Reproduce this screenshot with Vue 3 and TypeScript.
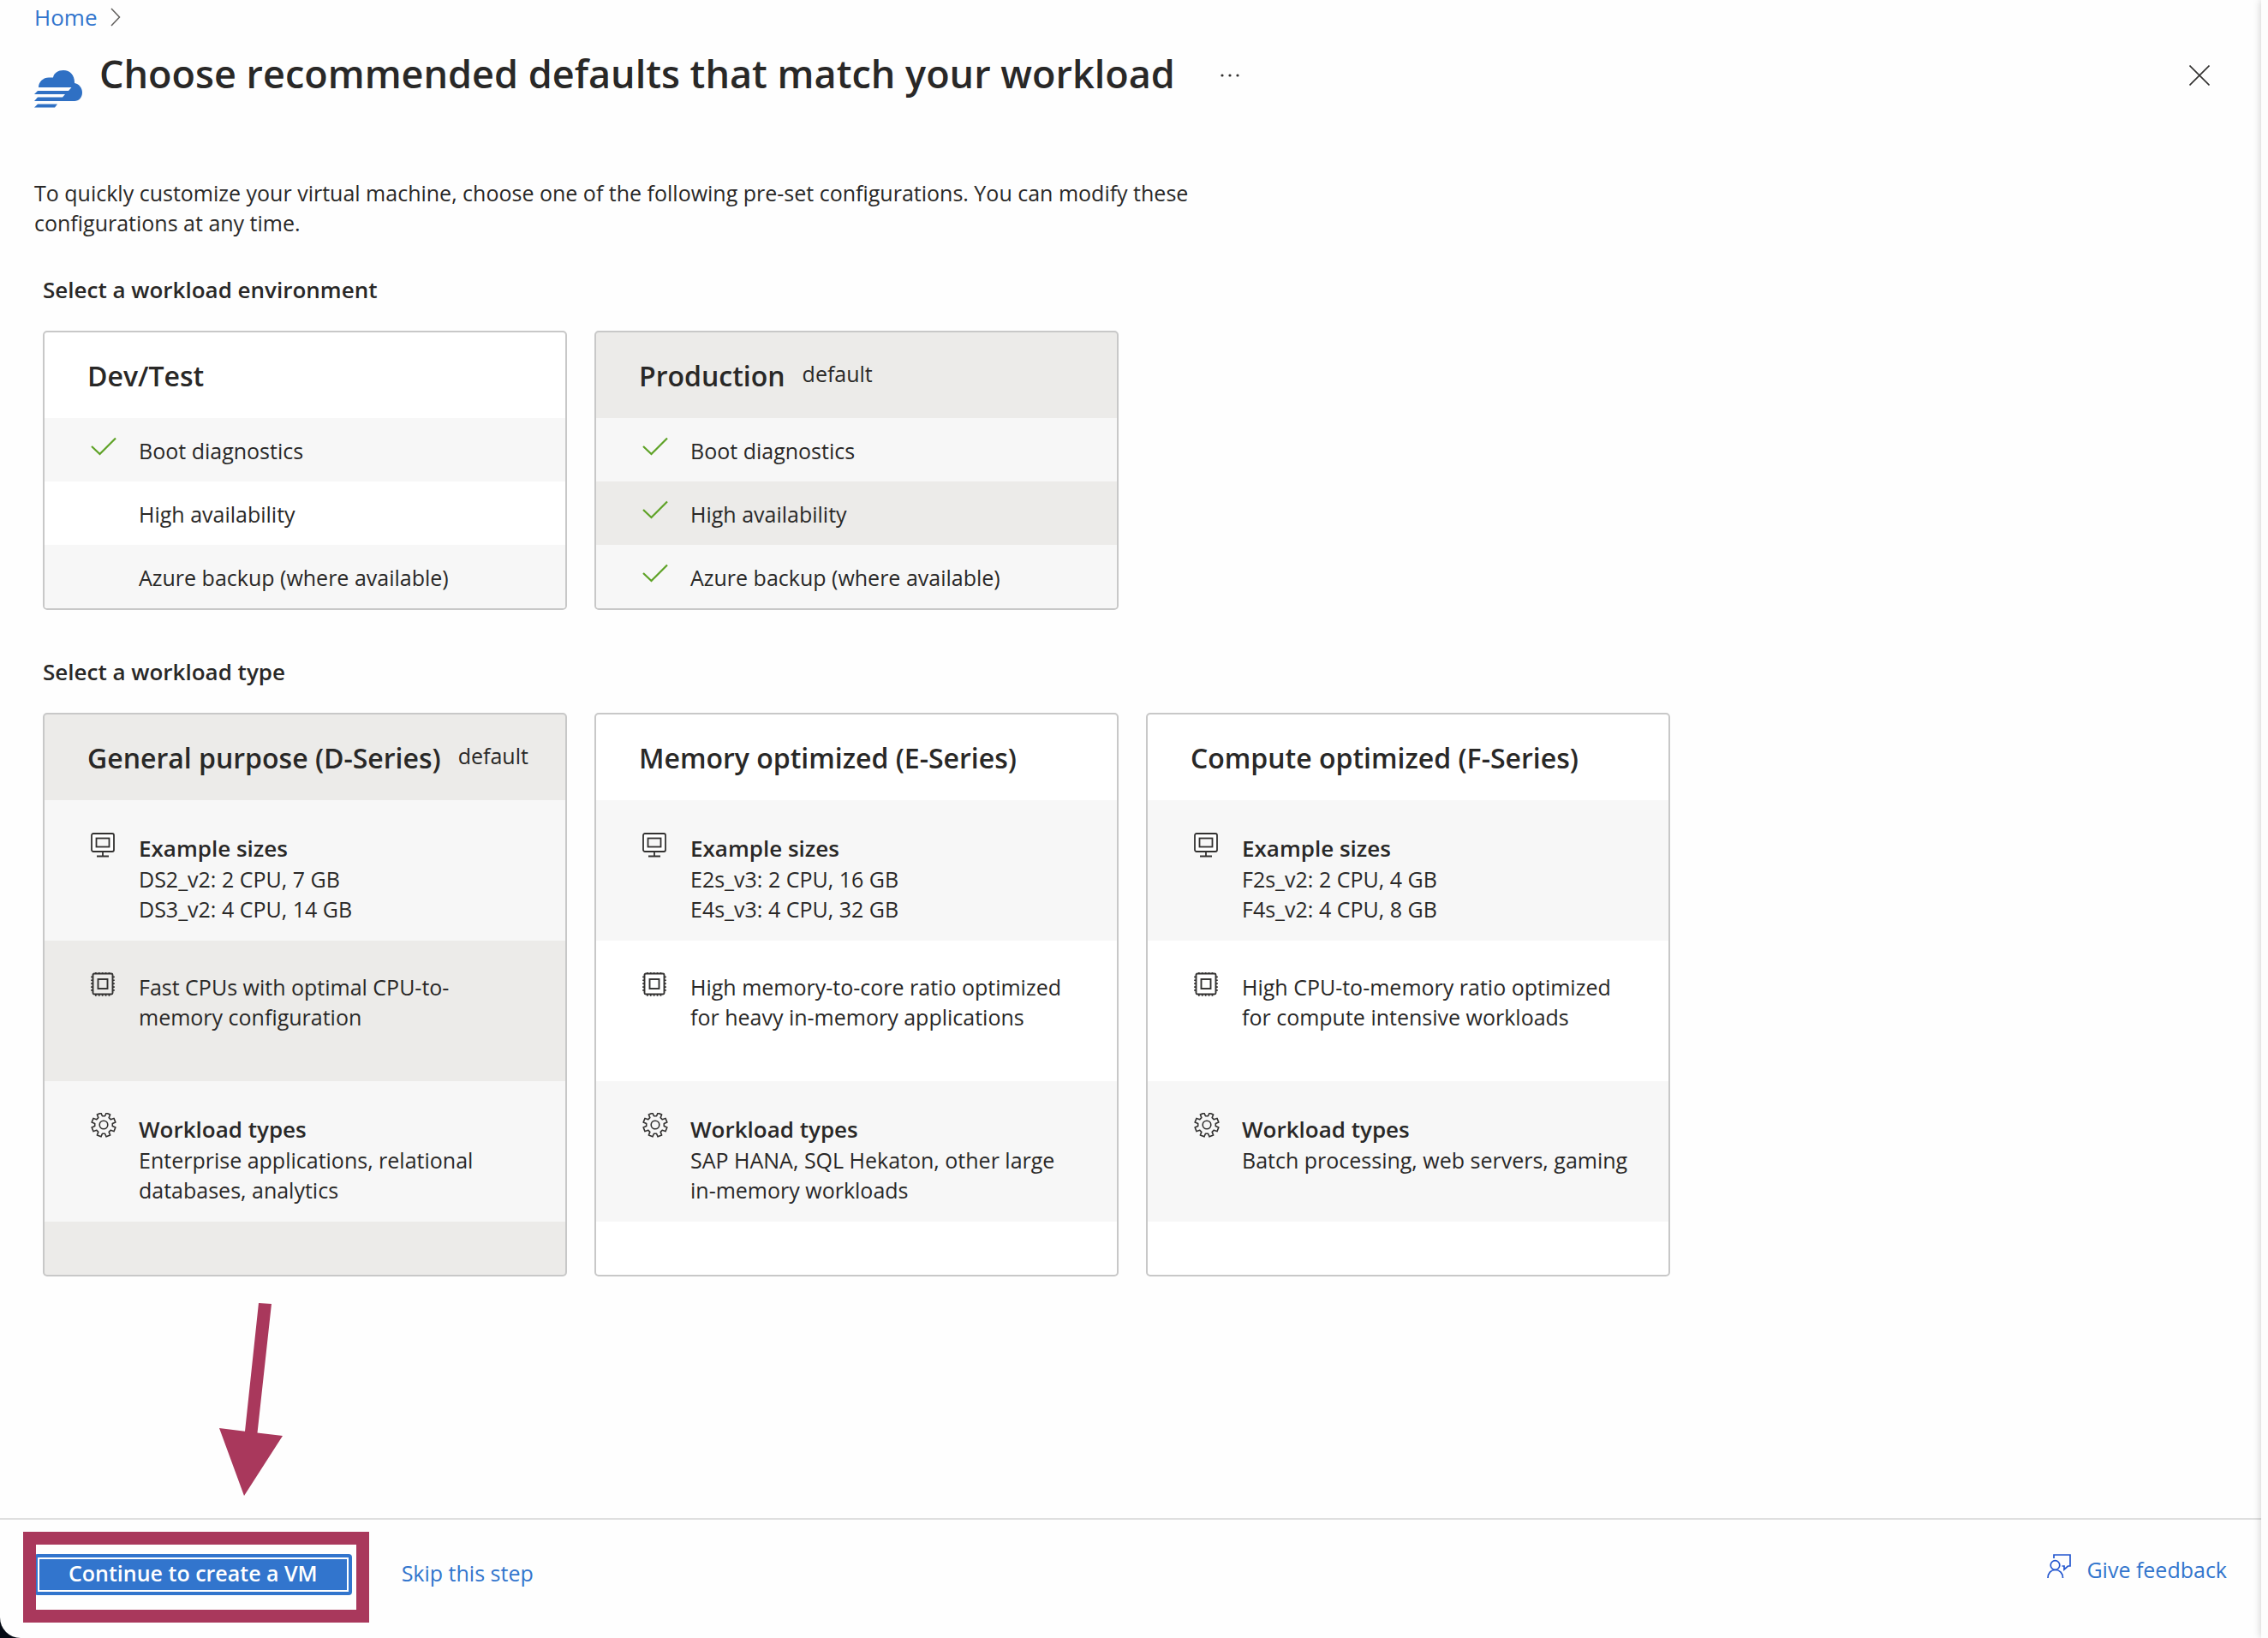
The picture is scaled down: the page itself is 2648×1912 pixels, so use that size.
<script setup lang="ts">
import { ref } from 'vue'

interface Environment {
  id: string
  name: string
  features: { label: string; included: boolean }[]
}

interface WorkloadType {
  id: string
  name: string
  sizes: string[]
  summary: string
  workloads: string
}

const defaultEnvironment = 'production'
const defaultType = 'general'

const environment = ref(defaultEnvironment)
const workloadType = ref(defaultType)

const environments: Environment[] = [
  {
    id: 'devtest',
    name: 'Dev/Test',
    features: [
      { label: 'Boot diagnostics', included: true },
      { label: 'High availability', included: false },
      { label: 'Azure backup (where available)', included: false },
    ],
  },
  {
    id: 'production',
    name: 'Production',
    features: [
      { label: 'Boot diagnostics', included: true },
      { label: 'High availability', included: true },
      { label: 'Azure backup (where available)', included: true },
    ],
  },
]

const workloadTypes: WorkloadType[] = [
  {
    id: 'general',
    name: 'General purpose (D-Series)',
    sizes: ['DS2_v2: 2 CPU, 7 GB', 'DS3_v2: 4 CPU, 14 GB'],
    summary: 'Fast CPUs with optimal CPU-to-memory configuration',
    workloads: 'Enterprise applications, relational databases, analytics',
  },
  {
    id: 'memory',
    name: 'Memory optimized (E-Series)',
    sizes: ['E2s_v3: 2 CPU, 16 GB', 'E4s_v3: 4 CPU, 32 GB'],
    summary: 'High memory-to-core ratio optimized for heavy in-memory applications',
    workloads: 'SAP HANA, SQL Hekaton, other large in-memory workloads',
  },
  {
    id: 'compute',
    name: 'Compute optimized (F-Series)',
    sizes: ['F2s_v2: 2 CPU, 4 GB', 'F4s_v2: 4 CPU, 8 GB'],
    summary: 'High CPU-to-memory ratio optimized for compute intensive workloads',
    workloads: 'Batch processing, web servers, gaming',
  },
]

// Eight-toothed gear outline centred in a 30 x 30 box.
function gearPath(): string {
  const point = (radius: number, degrees: number): string => {
    const a = (degrees * Math.PI) / 180
    return `${(15 + radius * Math.sin(a)).toFixed(2)} ${(15 - radius * Math.cos(a)).toFixed(2)}`
  }
  const points: string[] = []
  for (let k = 0; k < 8; k++) {
    const mid = 22.5 + k * 45
    points.push(point(10.4, mid - 14), point(14.2, mid - 10), point(14.2, mid + 10), point(10.4, mid + 14))
  }
  return `M${points.join('L')}Z`
}

const gear = gearPath()
</script>

<template>
  <div class="window">
    <div class="blade">
      <main class="content">
        <nav class="breadcrumb" aria-label="Breadcrumb">
          <a href="#">Home</a>
          <svg width="12" height="22" viewBox="0 0 12 22" aria-hidden="true">
            <path d="M1 1 L10.500 11 L1 21" fill="none" stroke="#605e5c" stroke-width="1.500" />
          </svg>
        </nav>

        <header class="title-bar">
          <svg class="logo" width="56" height="44" viewBox="0 0 56 44" aria-hidden="true">
            <path
              fill="#2f70c4"
              d="M5 20 C5 13 11 8 18 8.500 H22 C23 3 28 0 34 0 C42 0 47 6 47 14 V15 C52 16 56 20 56 26 C56 32 52 36 47 36 H0 L4 31.500 H33 L36 28 H0 L4 24 H40 L43.500 20 Z"
            />
            <path fill="#2f70c4" d="M4 39.500 H27 L24 43.500 H0 Z" />
          </svg>
          <h1>Choose recommended defaults that match your workload</h1>
          <button class="more" type="button" aria-label="More options">
            <svg width="24" height="6" viewBox="0 0 24 6" aria-hidden="true">
              <g fill="#323130">
                <circle cx="3" cy="3" r="1.600" />
                <circle cx="12" cy="3" r="1.600" />
                <circle cx="21" cy="3" r="1.600" />
              </g>
            </svg>
          </button>
          <button class="close" type="button" aria-label="Close">
            <svg width="24" height="24" viewBox="0 0 24 24" aria-hidden="true">
              <path d="M.5 .5 L23.500 23.500 M23.500 .5 L.5 23.500" stroke="#323130" stroke-width="1.600" />
            </svg>
          </button>
        </header>

        <p class="intro">
          To quickly customize your virtual machine, choose one of the following pre-set configurations. You can modify
          these configurations at any time.
        </p>

        <section class="group" role="radiogroup" aria-labelledby="environment-heading">
          <h2 id="environment-heading">Select a workload environment</h2>
          <div class="cards">
            <label
              v-for="env in environments"
              :key="env.id"
              class="card"
              :class="{ selected: environment === env.id }"
            >
              <input v-model="environment" class="choice" type="radio" name="environment" :value="env.id" />
              <span class="card-head">
                <span class="card-name">{{ env.name }}</span>
                <span v-if="env.id === defaultEnvironment" class="card-note">default</span>
              </span>
              <span v-for="feature in env.features" :key="feature.label" class="feature">
                <svg class="icon" width="30" height="30" viewBox="0 0 30 30" aria-hidden="true">
                  <path
                    v-if="feature.included"
                    d="M1 13 L10.500 22 L29 3.500"
                    fill="none"
                    stroke="#5ea226"
                    stroke-width="2.200"
                  />
                </svg>
                <span>{{ feature.label }}</span>
              </span>
            </label>
          </div>
        </section>

        <section class="group" role="radiogroup" aria-labelledby="type-heading">
          <h2 id="type-heading">Select a workload type</h2>
          <div class="cards">
            <label
              v-for="type in workloadTypes"
              :key="type.id"
              class="card tall"
              :class="{ selected: workloadType === type.id }"
            >
              <input v-model="workloadType" class="choice" type="radio" name="workload-type" :value="type.id" />
              <span class="card-head">
                <span class="card-name">{{ type.name }}</span>
                <span v-if="type.id === defaultType" class="card-note">default</span>
              </span>
              <span class="detail">
                <svg class="icon" width="30" height="30" viewBox="0 0 30 30" aria-hidden="true">
                  <g stroke="#323130" stroke-width="1.800">
                    <rect x="1" y="2" width="26" height="21" rx="2" fill="#fff" />
                    <rect x="6.500" y="7.500" width="15" height="10" fill="#f7f7f7" />
                    <path d="M14 23 V28 M7 28.500 H21" fill="none" />
                  </g>
                </svg>
                <span class="detail-text">
                  <strong>Example sizes</strong>
                  <span v-for="size in type.sizes" :key="size">{{ size }}</span>
                </span>
              </span>
              <span class="detail">
                <svg class="icon" width="30" height="30" viewBox="0 0 30 30" aria-hidden="true">
                  <g fill="none" stroke="#323130">
                    <rect x="2.500" y="1.500" width="23" height="24" rx="1.500" stroke-width="1.900" />
                    <rect x="8.500" y="8" width="11" height="11" stroke-width="1.900" />
                    <path
                      d="M5 .5 H24 M5 26.500 H24"
                      stroke-width="2.400"
                      stroke-dasharray="1.700 2.200"
                    />
                    <path
                      d="M1.400 4.500 V23 M26.600 4.500 V23"
                      stroke-width="2.400"
                      stroke-dasharray="1.700 2.200"
                    />
                  </g>
                </svg>
                <span class="detail-text">
                  <span>{{ type.summary }}</span>
                </span>
              </span>
              <span class="detail">
                <svg class="icon" width="30" height="30" viewBox="0 1 30 30" aria-hidden="true">
                  <g fill="none" stroke="#323130" stroke-width="1.600" stroke-linejoin="round">
                    <path :d="gear" />
                    <circle cx="15" cy="15" r="4.800" />
                  </g>
                </svg>
                <span class="detail-text">
                  <strong>Workload types</strong>
                  <span>{{ type.workloads }}</span>
                </span>
              </span>
            </label>
          </div>
        </section>
      </main>

      <footer class="footer">
        <div class="primary-slot">
          <button class="primary" type="button">Continue to create a VM</button>
          <span class="highlight" aria-hidden="true"></span>
          <svg class="arrow" width="76" height="226" viewBox="255 1521 76 226" aria-hidden="true">
            <path fill="#a9385c" d="M302 1521 L317 1522 L300.500 1672.500 L330 1676 L285 1746 L256 1667 L286 1670.700 Z" />
          </svg>
        </div>
        <a class="skip" href="#">Skip this step</a>
        <a class="feedback" href="#">
          <svg width="28" height="28" viewBox="0 0 28 28" aria-hidden="true">
            <g fill="none" stroke="#2457cf" stroke-width="1.700">
              <path d="M8 5 V1 H27 V14 H24.500 L20 18 V14 H17.500" />
              <circle cx="9.500" cy="13" r="5.300" />
              <path d="M1 28 C1 22.500 4.500 18.500 9.700 18.500 C14.900 18.500 18.500 22.500 18.500 28" />
            </g>
          </svg>
          <span>Give feedback</span>
        </a>
      </footer>
    </div>
    <div class="edge"></div>
  </div>
</template>

<style>
body {
  margin: 0;
  background: #050a14;
}
</style>

<style scoped>
.window {
  display: flex;
  min-height: 100vh;
  overflow: hidden;
  border-bottom-left-radius: 24px;
  background: #fefefe;
  color: #292827;
  font-family: 'Open Sans', 'Noto Sans', sans-serif;
  font-size: 25px;
  line-height: 35px;
}

.blade {
  display: flex;
  flex: 1;
  flex-direction: column;
  min-width: 0;
}

.edge {
  flex: none;
  width: 8px;
  background: #fdfdfd;
  box-shadow: 0 0 10px rgba(0, 0, 0, 0.22);
}

.content {
  flex: 1;
  padding: 2px 40px 60px;
}

a {
  color: #3275cd;
  text-decoration: none;
}

button {
  padding: 0;
  border: 0;
  background: none;
  font: inherit;
}

svg {
  display: block;
  flex: none;
}

.breadcrumb {
  display: flex;
  align-items: center;
  gap: 16px;
  font-size: 26px;
  line-height: 36px;
}

.title-bar {
  display: flex;
  align-items: flex-start;
  margin-top: 18px;
}

.logo {
  margin: 26px 20px 0 0;
}

h1 {
  margin: 0;
  font-size: 45px;
  font-weight: 600;
  line-height: 60px;
}

.more,
.close {
  display: flex;
  align-items: center;
  height: 64px;
}

.more {
  margin-left: 52px;
}

.close {
  margin-right: 20px;
  margin-left: auto;
}

.intro {
  max-width: 1350px;
  margin: 82px 0 0;
}

.group {
  padding: 0 10px;
  margin-top: 42px;
}

.group + .group {
  margin-top: 54px;
}

h2 {
  margin: 0 0 30px;
  font-size: 26px;
  font-weight: 600;
  line-height: 36px;
}

.cards {
  display: flex;
  gap: 32px;
}

.card {
  display: flex;
  flex: 0 1 608px;
  flex-direction: column;
  overflow: hidden;
  border: 2px solid #c8c8c8;
  border-radius: 5px;
  background: #fff;
  cursor: pointer;
}

.card.selected {
  background: #ecebe9;
}

.card.tall {
  padding-bottom: 62px;
}

.choice {
  position: absolute;
  opacity: 0;
  pointer-events: none;
}

.card-head {
  display: flex;
  align-items: center;
  gap: 20px;
  height: 100px;
  padding: 0 20px 0 50px;
  white-space: nowrap;
}

.card-name {
  font-size: 32px;
  font-weight: 600;
}

.card-note {
  padding-bottom: 4px;
}

.feature {
  display: flex;
  gap: 26px;
  padding: 20px 40px 18px 54px;
  line-height: 36px;
}

.feature:nth-child(odd),
.detail:nth-child(odd) {
  background: #f7f7f7;
}

.detail {
  display: flex;
  gap: 26px;
  min-height: 127px;
  padding: 37px 40px 0 54px;
}

.detail-text {
  display: flex;
  flex-direction: column;
}

strong {
  font-size: 26px;
  font-weight: 600;
  line-height: 38px;
}

.footer {
  display: flex;
  align-items: flex-start;
  padding: 40px;
  border-top: 2px solid #dfdfdf;
}

.primary-slot {
  position: relative;
  margin-bottom: 10px;
}

.primary {
  display: block;
  height: 48px;
  padding: 0 40px 4px;
  border-radius: 4px;
  outline: 2px solid #fff;
  outline-offset: -6px;
  background: #3275cd;
  color: #fff;
  font-weight: 600;
  line-height: 44px;
}

.highlight {
  position: absolute;
  inset: -26px -20px -32px -13px;
  border: 15px solid #a9385c;
}

.arrow {
  position: absolute;
  bottom: 115px;
  left: 215px;
}

.skip {
  margin-left: 58px;
  line-height: 44px;
}

.feedback {
  display: flex;
  gap: 18px;
  margin-left: auto;
  line-height: 36px;
}
</style>
